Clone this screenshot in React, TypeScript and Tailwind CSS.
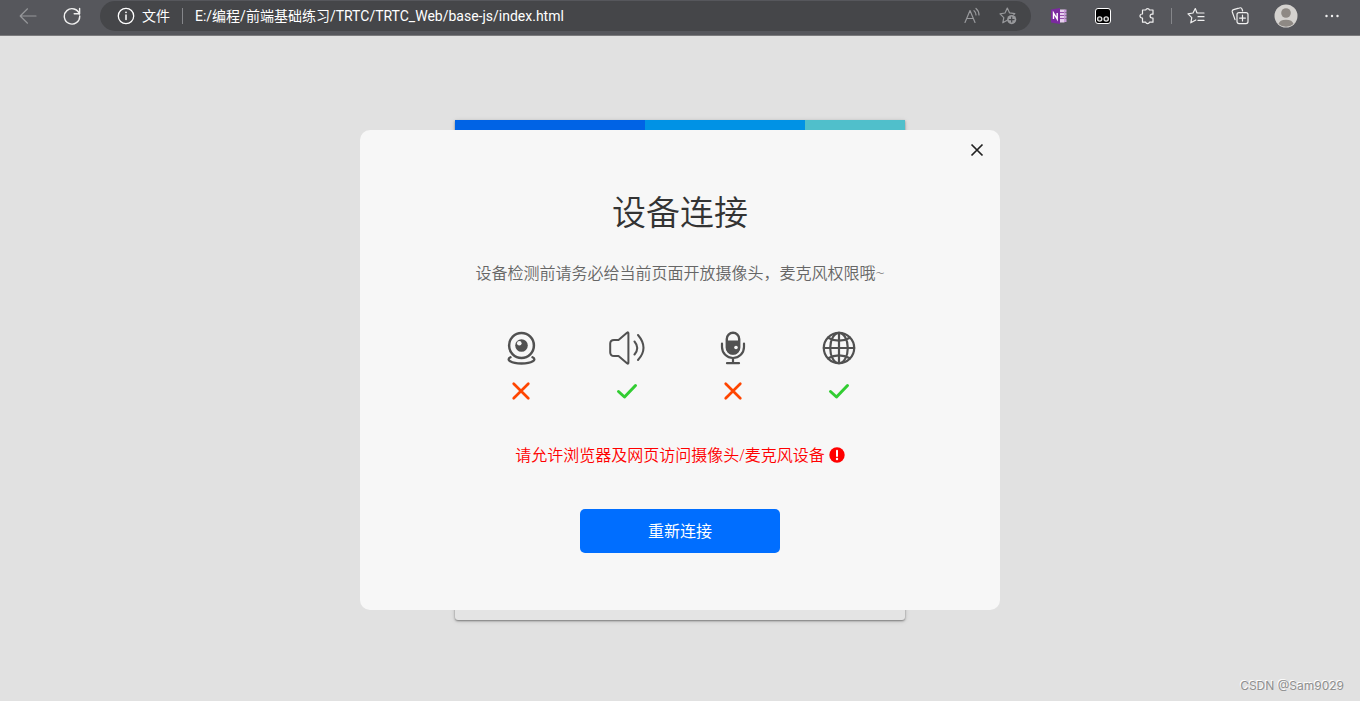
import type { ReactNode } from 'react';

function Svg({ size = 'size-[18px]', box = 18, children }: { size?: string; box?: number; children: ReactNode }) {
  return (
    <svg
      className={`block shrink-0 ${size}`}
      viewBox={`0 0 ${box} ${box}`}
      fill="none"
      stroke="currentColor"
      strokeWidth="1.2"
      strokeLinecap="round"
      strokeLinejoin="round"
      aria-hidden="true"
    >
      {children}
    </svg>
  );
}

function ToolButton({ label, children }: { label: string; children: ReactNode }) {
  return (
    <button type="button" aria-label={label} className="flex h-8 w-11 shrink-0 items-center justify-center">
      {children}
    </button>
  );
}

function BrowserBar() {
  return (
    <header className="flex h-9 items-center border-b border-[#7b7b7d] bg-[#56575c] pr-1.5 pb-[3px] pl-1.5 text-[#f0f0f0]">
      <button type="button" aria-label="后退" className="flex h-8 w-11 shrink-0 items-center justify-center text-[#96979a]">
        <Svg>
          <path d="M17 9H1.5M8.5 1.8 1.2 9l7.3 7.2" />
        </Svg>
      </button>
      <ToolButton label="刷新">
        <Svg>
          <path d="M16.4 7.2A7.7 7.7 0 1 0 16.7 9M16.6 1.4v5.4h-5.4" strokeWidth="1.4" />
        </Svg>
      </ToolButton>
      <div className="mr-1.5 ml-1.5 flex h-[30px] min-w-0 flex-1 items-center rounded-full bg-[#454649] pr-[14px] pl-[17px] font-['Roboto','Noto_Sans_CJK_SC',sans-serif] text-sm text-white">
        <Svg>
          <circle cx="9" cy="9" r="7.7" strokeWidth="1.3" />
          <path d="M9 8v4.5" strokeWidth="1.5" />
          <circle cx="9" cy="5.3" r=".9" fill="currentColor" stroke="none" />
        </Svg>
        <span className="ml-[7px] shrink-0">文件</span>
        <span className="mx-3 h-4 w-px shrink-0 bg-[#85868a]" />
        <span className="min-w-0 flex-1 truncate">E:/编程/前端基础练习/TRTC/TRTC_Web/base-js/index.html</span>
        <div className="flex shrink-0 items-center gap-[18px] text-[#98999c]">
          <button type="button" aria-label="大声朗读">
            <Svg>
              <path d="M2 15.5 7 3.5l5 12M3.7 11.5h6.6M11 3.7a5 5 0 0 1 2 4.3M13 1.5a8.5 8.5 0 0 1 3 6.5" />
            </Svg>
          </button>
          <button type="button" aria-label="添加到收藏夹">
            <Svg>
              <path d="M8.2 13.3 3.8 15.8l1-5.2L1 6.8l5-.8L8.300 1l2.200 4.800 5.300.8-1 1" />
              <circle cx="12.7" cy="12.6" r="4.6" fill="currentColor" stroke="none" />
              <path d="M12.7 10.2V15M10.3 12.6h4.8" stroke="#454649" />
            </Svg>
          </button>
        </div>
      </div>
      <ToolButton label="OneNote">
        <svg viewBox="0 0 18 18" className="size-[18px]" aria-hidden="true">
          <path d="M9 2.500h5.500v13H9z" fill="#e6cfee" />
          <path d="M14 2.500h2.500v3H14zm0 3.500h2.500v2.500H14zm0 3h2.500v2.500H14zm0 3h2.500v3H14z" fill="#c99bdb" />
          <path d="M10 5.500h4M10 8.500h4M10 11.500h4" stroke="#80309b" strokeWidth=".8" />
          <path d="M1 2.5 10 1v16l-9-1.5z" fill="#7b2aa0" />
          <path d="M3.5 12V6l3.7 6V6" fill="none" stroke="#fff" strokeWidth="1.4" />
        </svg>
      </ToolButton>
      <ToolButton label="用户脚本扩展">
        <svg viewBox="0 0 18 18" className="size-[18px]" aria-hidden="true">
          <rect x="1.5" y="1.5" width="15" height="15" rx="2.5" fill="#000" stroke="#fff" />
          <circle cx="5.7" cy="12" r="2.1" fill="#222" stroke="#ddd" strokeWidth="1.4" />
          <circle cx="12.2" cy="12" r="2.1" fill="#222" stroke="#ddd" strokeWidth="1.4" />
        </svg>
      </ToolButton>
      <ToolButton label="扩展">
        <Svg>
          <path d="M4.500 3h3.200a2 2 0 0 1 3.800 0H15v4.200h-1a1.900 1.900 0 0 0 0 3.800h1v4.200h-3.500a2 2 0 0 1-3.800 0H4.500V11H4a2 2 0 0 1 0-4h.5z" />
        </Svg>
      </ToolButton>
      <span className="mx-0.5 h-4 w-px shrink-0 bg-[#85868a]" />
      <ToolButton label="收藏夹">
        <Svg>
          <path d="M10 6 8.3 1.5 6 6l-5 .8 3.8 3.8-1 5.2 5-2.8M10.5 6H17M11 9.7h6M11 13.4h6" />
        </Svg>
      </ToolButton>
      <ToolButton label="集锦">
        <Svg>
          <path d="M4 12.6 1.3 5A2 2 0 0 1 2.6 2.6L8.6.9a2 2 0 0 1 2.5 1.3L11.6 4" />
          <rect x="6" y="5.6" width="11" height="11" rx="2" />
          <path d="M11.5 8.2V14M8.6 11.1h5.8" />
        </Svg>
      </ToolButton>
      <button type="button" aria-label="个人资料" className="mx-0.5 flex h-8 w-11 shrink-0 items-center justify-center">
        <svg viewBox="0 0 24 24" className="size-6" aria-hidden="true">
          <circle cx="12" cy="12" r="11.5" fill="#d4d2cf" />
          <circle cx="12" cy="9" r="4.8" fill="#8e8984" />
          <path d="M4.5 20a7.6 5.2 0 0 1 15 0 11.5 11.5 0 0 1-15 0z" fill="#8e8984" />
        </svg>
      </button>
      <ToolButton label="设置及其他">
        <Svg>
          <path d="M3.5 9h.01M9 9h.01M14.5 9h.01" strokeWidth="2.4" />
        </Svg>
      </ToolButton>
    </header>
  );
}

const cameraIcon = (
  <Svg size="size-9" box={36}>
    <circle cx="18.500" cy="15.5" r="12.4" strokeWidth="2.5" />
    <circle cx="18.500" cy="15.5" r="6.3" fill="currentColor" stroke="none" />
    <circle cx="16.300" cy="13.2" r="2.3" fill="#f7f7f7" stroke="none" />
    <path d="M7.500 27.3c-5 2.500.5 6.200 11 6.200s16-3.700 11-6.200" strokeWidth="2.3" />
  </Svg>
);

const speakerIcon = (
  <Svg size="size-9" box={36}>
    <path d="M9.5 10 18 2.7q1.4-1 1.4.5v29.6q0 1.5-1.4.5L9.5 26H5q-3.8 0-3.8-3.8v-8.4Q1.200 10 5 10z" strokeWidth="2" />
    <path d="M25.500 11.500q5.500 6.500 0 13M29 5q11 13 0 25" strokeWidth="2" />
  </Svg>
);

const microphoneIcon = (
  <Svg size="size-9" box={36}>
    <rect x="11.800" y="2.800" width="12.400" height="20.800" rx="6.200" strokeWidth="2.400" />
    <path d="M11 10.500h14v7a7 7 0 0 1-14 0z" fill="currentColor" stroke="none" />
    <circle cx="21" cy="17.500" r="1.800" fill="#f7f7f7" stroke="none" />
    <path d="M7 13.500v3.500a11 11 0 0 0 22 0v-3.500" strokeWidth="2.200" />
    <path d="M18 28v5M12 33.200h12" strokeWidth="2.200" />
  </Svg>
);

const networkIcon = (
  <Svg size="size-9" box={36}>
    <g strokeWidth="2.200">
      <circle cx="18" cy="18" r="15.200" />
      <path d="M18 2.800v30.400M2.800 18h30.400" />
      <ellipse cx="18" cy="18" rx="8.800" ry="15.200" />
      <path d="M7 7.700q11 6 22 0M7 28.300q11-6 22 0" />
    </g>
  </Svg>
);

const devices = [
  { name: '摄像头', icon: cameraIcon, connected: false },
  { name: '扬声器', icon: speakerIcon, connected: true },
  { name: '麦克风', icon: microphoneIcon, connected: false },
  { name: '网络', icon: networkIcon, connected: true },
];

function Status({ connected }: { connected: boolean }) {
  return connected ? (
    <svg viewBox="0 0 24 24" className="size-6" fill="none" stroke="#32cd32" strokeWidth="3" strokeLinecap="round" strokeLinejoin="round" role="img" aria-label="正常">
      <path d="m3.500 12.500 6 5.500L20.500 6.500" />
    </svg>
  ) : (
    <svg viewBox="0 0 24 24" className="size-6" fill="none" stroke="#ff4500" strokeWidth="2.700" strokeLinecap="round" role="img" aria-label="异常">
      <path d="m4.700 4.700 14.600 14.600M19.300 4.700 4.700 19.300" />
    </svg>
  );
}

function DeviceDialog() {
  return (
    <section
      role="dialog"
      aria-labelledby="device-title"
      className="z-10 col-start-1 row-start-1 flex w-full max-w-[640px] flex-col items-center rounded-[10px] bg-[#f7f7f7] pb-[57px]"
    >
      <button type="button" aria-label="关闭" className="mt-2 mr-[11px] self-end p-1 text-[#222]">
        <svg viewBox="0 0 16 16" className="size-4" stroke="currentColor" strokeWidth="1.700" aria-hidden="true">
          <path d="m2.500 2.500 11 11M13.500 2.500l-11 11" />
        </svg>
      </button>
      <h1 id="device-title" className="mt-6 text-[34px] leading-[52px] font-[350] text-[#333]">设备连接</h1>
      <p className="mt-[23px] text-base leading-6 font-[350] text-[#666]">设备检测前请务必给当前页面开放摄像头，麦克风权限哦~</p>
      <ul className="mt-[45px] grid grid-cols-[repeat(4,106px)] text-[#515151]">
        {devices.map(({ name, icon, connected }) => (
          <li key={name} aria-label={name} className="flex flex-col items-center gap-[13px]">
            {icon}
            <Status connected={connected} />
          </li>
        ))}
      </ul>
      <p className="mt-10 flex items-center gap-1 text-base leading-6 font-[350] text-[#f00]">
        请允许浏览器及网页访问摄像头/麦克风设备
        <svg viewBox="0 0 16 16" className="size-4" aria-hidden="true">
          <circle cx="8" cy="8" r="7.700" fill="#f00" />
          <path d="M8 3.800V9" stroke="#fff" strokeWidth="2" strokeLinecap="round" />
          <circle cx="8" cy="12" r="1.200" fill="#fff" />
        </svg>
      </p>
      <button type="button" className="mt-[42px] h-11 w-[200px] rounded-[5px] bg-[#006eff] text-base text-white">
        重新连接
      </button>
    </section>
  );
}

export default function App() {
  return (
    <div className="flex min-h-screen flex-col bg-[#e1e1e1] font-['Open_Sans','Noto_Sans_CJK_SC',sans-serif]">
      <BrowserBar />
      <main className="grid flex-1 grid-cols-1 grid-rows-[500px] items-center justify-items-center pt-[84px]">
        <div className="col-start-1 row-start-1 flex h-full w-full max-w-[450px] flex-col overflow-hidden rounded-b-[3px] bg-[#e4e4e4] shadow-[0_1px_2px_rgba(0,0,0,0.4),0_1px_5px_rgba(0,0,0,0.15)]">
          <div className="flex h-2.5">
            <span className="w-[190px] bg-[#0063e5]" />
            <span className="w-40 bg-[#0092e5]" />
            <span className="flex-1 bg-[#50bfcb]" />
          </div>
        </div>
        <DeviceDialog />
      </main>
      <footer className="flex justify-end pr-4 pb-1.5 font-['Inter',sans-serif] text-xs leading-[18px] text-[#909090] [text-shadow:-1px_-1px_0_#fff]">
        CSDN @Sam9029
      </footer>
    </div>
  );
}
